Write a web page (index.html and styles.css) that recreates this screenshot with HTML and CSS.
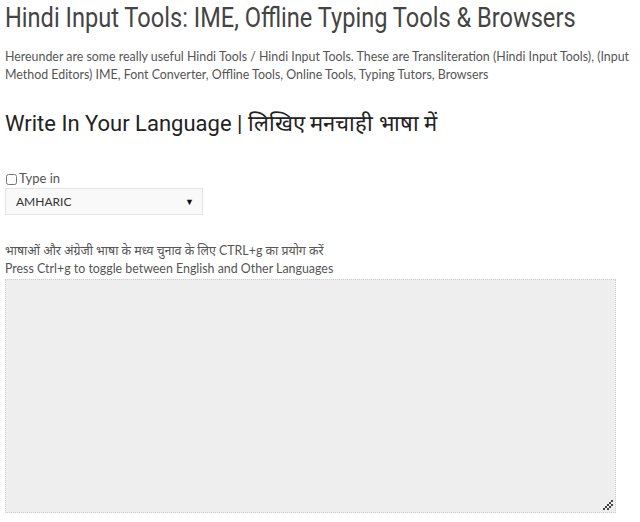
FILE: index.html
```html
<!DOCTYPE html>
<html>
<head>
<meta charset="utf-8">
<link rel="stylesheet" href="styles.css">
</head>
<body>
<div class="page">
  <h1 class="title">Hindi Input Tools: IME, Offline Typing Tools &amp; Browsers</h1>
  <p class="intro">Hereunder are some really useful Hindi Tools / Hindi Input Tools. These are Transliteration (Hindi Input Tools), (Input Method Editors) IME, Font Converter, Offline Tools, Online Tools, Typing Tutors, Browsers</p>
  <h2 class="subtitle">Write In Your Language | लिखिए मनचाही भाषा में</h2>
  <div class="typein">
    <label class="check"><input type="checkbox" class="cb"><span>Type in</span></label>
    <div class="select"><span>AMHARIC</span><span class="arrow">▼</span></div>
  </div>
  <div class="hint">
    <div>भाषाओं और अंग्रेजी भाषा के मध्य चुनाव के लिए CTRL+g का प्रयोग करें</div>
    <div>Press Ctrl+g to toggle between English and Other Languages</div>
  </div>
  <div class="area">
    <svg class="grip" width="12" height="12" viewBox="0 0 12 12"><g fill="#444"><rect x="9" y="1" width="2" height="2"/><rect x="7" y="3" width="2" height="2"/><rect x="5" y="5" width="2" height="2"/><rect x="3" y="7" width="2" height="2"/><rect x="1" y="9" width="2" height="2"/><rect x="9" y="5" width="2" height="2"/><rect x="7" y="7" width="2" height="2"/><rect x="5" y="9" width="2" height="2"/></g></svg>
  </div>
</div>
</body>
</html>
```

FILE: styles.css
```css
html, body { margin: 0; padding: 0; background: #fff; }
.page {
  padding: 0 5px;
  color: #555;
  font-family: "Lato", "Noto Sans", sans-serif;
}
.title {
  margin: 0;
  padding-top: 2px;
  font-family: "Roboto", sans-serif;
  font-weight: 400;
  font-size: 28px;
  line-height: 32px;
  color: #444;
  white-space: nowrap;
  transform: scaleX(0.843);
  transform-origin: left center;
}
.intro {
  margin: 14px 0 0;
  font-size: 12.4px;
  line-height: 18px;
  color: #555;
}
.subtitle {
  margin: 26px 0 0;
  font-family: "Roboto", sans-serif;
  font-weight: 400;
  font-size: 22px;
  line-height: 28px;
  color: #222;
}
.typein { margin-top: 32px; }
.check { display: flex; align-items: center; gap: 2px; font-size: 13px; line-height: 16px; }
.cb { margin: 2px 0 0 1px; width: 11px; height: 11px; }
.select {
  margin-top: 2px;
  width: 198px;
  height: 27px;
  box-sizing: border-box;
  border: 1px solid #e5e5e5;
  background: #f9f9f9;
  display: flex;
  align-items: center;
  justify-content: space-between;
  padding: 0 8px 0 10px;
  font-size: 12px;
  color: #333;
}
.arrow { font-size: 9px; color: #111; }
.hint { margin-top: 27px; font-size: 12.4px; line-height: 18px; }
.area {
  margin-top: 1px;
  width: 611px;
  height: 234px;
  box-sizing: border-box;
  border: 1px dotted #ccc;
  background: #eee;
  position: relative;
}
.grip { position: absolute; right: 1px; bottom: 1px; }
```
